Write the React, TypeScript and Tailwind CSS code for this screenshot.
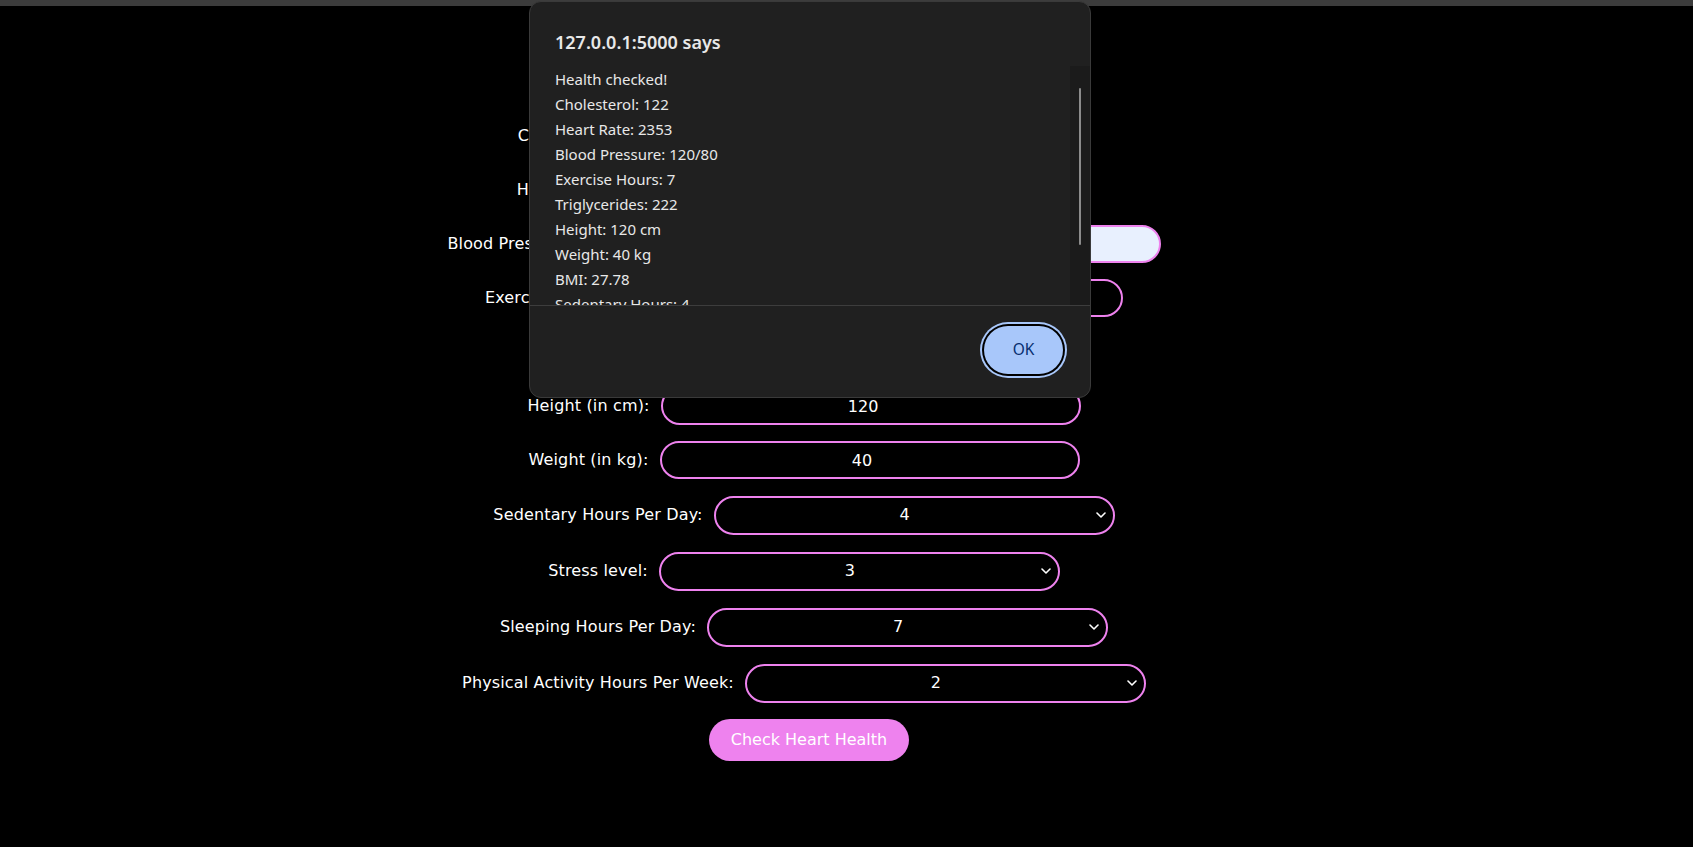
import { useState } from 'react'

type Field = {
  key: string
  label: string
  value: string
  kind: 'input' | 'select'
  width: string
  row: string
  autofill?: boolean
}

const FIELDS: Field[] = [
  { key: 'chol', label: 'Cholesterol level:', value: '122', kind: 'input', width: 'w-[420px]', row: 'h-[54px]' },
  { key: 'hr', label: 'Heart rate (bpm):', value: '2353', kind: 'input', width: 'w-[420px]', row: 'h-[54px]' },
  { key: 'bp', label: 'Blood Pressure (mmHg):', value: '120/80', kind: 'input', width: 'w-[504px]', row: 'h-[54px]', autofill: true },
  { key: 'ex', label: 'Exercise Hours Per Week:', value: '7', kind: 'input', width: 'w-[420px]', row: 'h-[54px]' },
  { key: 'tg', label: 'Triglycerides:', value: '222', kind: 'input', width: 'w-[420px]', row: 'h-[54px]' },
  { key: 'height', label: 'Height (in cm):', value: '120', kind: 'input', width: 'w-[420px]', row: 'h-[54px]' },
  { key: 'weight', label: 'Weight (in kg):', value: '40', kind: 'input', width: 'w-[420px]', row: 'h-[54px]' },
  { key: 'sed', label: 'Sedentary Hours Per Day:', value: '4', kind: 'select', width: 'w-[401px]', row: 'h-[56px]' },
  { key: 'stress', label: 'Stress level:', value: '3', kind: 'select', width: 'w-[401px]', row: 'h-[56px]' },
  { key: 'sleep', label: 'Sleeping Hours Per Day:', value: '7', kind: 'select', width: 'w-[401px]', row: 'h-[56px]' },
  { key: 'pa', label: 'Physical Activity Hours Per Week:', value: '2', kind: 'select', width: 'w-[401px]', row: 'h-[56px]' },
]

const ALERT_LINES = [
  'Health checked!',
  'Cholesterol: 122',
  'Heart Rate: 2353',
  'Blood Pressure: 120/80',
  'Exercise Hours: 7',
  'Triglycerides: 222',
  'Height: 120 cm',
  'Weight: 40 kg',
  'BMI: 27.78',
  'Sedentary Hours: 4',
  'Stress Level: 3',
  'Sleeping Hours: 7',
  'Physical Activity Hours: 2',
]

const OPTIONS = ['0', '1', '2', '3', '4', '5', '6', '7', '8', '9', '10']

function Chevron() {
  return (
    <svg className="pointer-events-none absolute right-[9px] top-1/2 -translate-y-1/2" width="10" height="6" viewBox="0 0 10 6" fill="none">
      <path d="M1 1l4 4 4-4" stroke="#fff" strokeWidth="1.6" strokeLinecap="round" strokeLinejoin="round" />
    </svg>
  )
}

function FormRow({ field }: { field: Field }) {
  return (
    <div className={`flex items-center justify-center gap-[11px] ${field.row}`}>
      <label className="text-white text-[16px] tracking-[0.15px] whitespace-nowrap">{field.label}</label>
      {field.kind === 'input' ? (
        <input
          type="text"
          defaultValue={field.value}
          className={`${field.width} h-[38px] rounded-full border-2 border-[#ee82ee] pl-[4px] pr-[19px] text-center text-[16px] outline-none ${
            field.autofill ? 'bg-[#e8f0fe] text-black' : 'bg-black text-white'
          }`}
        />
      ) : (
        <div className={`relative ${field.width}`}>
          <select
            defaultValue={field.value}
            className="w-full h-[39px] appearance-none rounded-full border-2 border-[#ee82ee] bg-black pl-[4px] pr-[23px] text-center [text-align-last:center] text-[16px] text-white outline-none"
          >
            {OPTIONS.map(o => (
              <option key={o} value={o}>{o}</option>
            ))}
          </select>
          <Chevron />
        </div>
      )}
    </div>
  )
}

function AlertDialog({ onClose }: { onClose: () => void }) {
  return (
    <div
      className="absolute left-[529px] top-[1px] w-[562px] h-[397px] flex flex-col rounded-[12px] border border-[#3a3a3a] bg-[#202020] text-[#e8e8e8] overflow-hidden"
      style={{ fontFamily: '"Noto Sans", "Open Sans", sans-serif' }}
    >
      <div className="h-[64px] pl-[25px] pt-[28px]">
        <h2 className="text-[18px] leading-[24px] font-semibold">127.0.0.1:5000 says</h2>
      </div>
      <div className="h-[239px] flex">
        <div className="flex-1 overflow-hidden pl-[25px] pt-[1px] text-[15px] leading-[25px]">
          {ALERT_LINES.map(l => (
            <div key={l}>{l}</div>
          ))}
        </div>
        <div className="w-[20px] bg-[#1b1b1b] flex justify-center">
          <div className="mt-[22px] w-[2px] h-[157px] rounded-full bg-[#8b8b8b]" />
        </div>
      </div>
      <div className="flex-1 flex justify-end items-start border-t border-[#3d3d3d] pt-[20px] pr-[27px]">
        <button
          onClick={onClose}
          className="w-[79px] h-[48px] rounded-full bg-[#a8c7fa] text-[#062e6f] text-[15.5px] shadow-[0_0_0_2px_#000,0_0_0_4px_#a8c7fa]"
        >
          OK
        </button>
      </div>
    </div>
  )
}

export default function App() {
  const [open, setOpen] = useState(true)

  return (
    <div className="relative min-h-screen bg-black" style={{ fontFamily: '"DejaVu Sans", Verdana, sans-serif' }}>
      <div className="h-[6px] bg-[#3c3c3c]" />
      <form className="flex flex-col pt-[103px] pr-[85px]" onSubmit={e => e.preventDefault()}>
        {FIELDS.map(f => (
          <FormRow key={f.key} field={f} />
        ))}
        <div className="flex justify-center mt-[8px]">
          <button
            type="submit"
            onClick={() => setOpen(true)}
            className="ml-[10px] h-[42px] px-[22px] rounded-full bg-[#ee82ee] text-white text-[16px]"
          >
            Check Heart Health
          </button>
        </div>
      </form>
      {open && <AlertDialog onClose={() => setOpen(false)} />}
    </div>
  )
}
